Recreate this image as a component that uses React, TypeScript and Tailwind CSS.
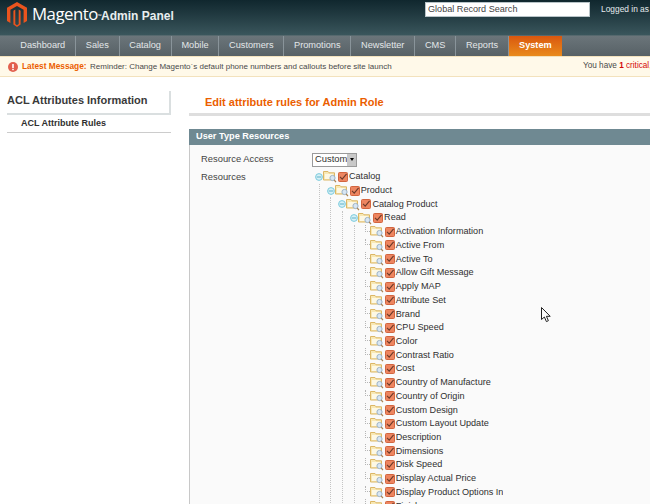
const navItems = ["Dashboard", "Sales", "Catalog", "Mobile", "Customers", "Promotions", "Newsletter", "CMS", "Reports"];
const leaves = ["Activation Information", "Active From", "Active To", "Allow Gift Message", "Apply MAP", "Attribute Set", "Brand", "CPU Speed", "Color", "Contrast Ratio", "Cost", "Country of Manufacture", "Country of Origin", "Custom Design", "Custom Layout Update", "Description", "Dimensions", "Disk Speed", "Display Actual Price", "Display Product Options In", "Finish"];

function Logo() {
  return (
    <svg width="20" height="25" viewBox="0 0 20 25" className="shrink-0">
      <path d="M10 0 L20 5.8 V19 L16.6 21 V7.8 L10 4 L3.4 7.8 V21 L0 19 V5.8 Z" fill="#e9541e" />
      <path d="M8.3 7.6 V22 L10 23.2 L11.7 22 V7.6 L13.6 8.7 V22.4 L10 25 L6.4 22.4 V8.7 Z" fill="#e9541e" />
    </svg>
  );
}

function Minus() {
  return (
    <svg width="8" height="8" viewBox="0 0 8 8" className="shrink-0">
      <circle cx="4" cy="4" r="3.4" fill="#d6f0f6" stroke="#7ccbdd" strokeWidth="1" />
      <path d="M1.8 4 H6.2" stroke="#5fb2c8" strokeWidth="1" />
    </svg>
  );
}

function Folder() {
  return (
    <svg width="14" height="13" viewBox="0 0 14 13" className="shrink-0">
      <path d="M0.5 1.5 H5 L6 2.8 H11.5 V10 H0.5 Z" fill="#f8e8b4" stroke="#dcb766" strokeWidth="1" />
      <path d="M2 4 H10 V9 H2 Z" fill="#fdf8e4" />
      <circle cx="9.5" cy="8" r="2.6" fill="#d8e6f3" stroke="#9db4c8" strokeWidth="1" />
      <path d="M11.2 10 L13 12.2" stroke="#a98456" strokeWidth="1.2" />
    </svg>
  );
}

function Check() {
  return (
    <svg width="10" height="10" viewBox="0 0 10 10" className="shrink-0">
      <rect x="0.5" y="0.5" width="9" height="9" rx="1" fill="#ed8560" stroke="#d2653f" strokeWidth="1" />
      <path d="M2 4.8 L4.2 7.2 L8.6 1.8" fill="none" stroke="#6b3a2a" strokeWidth="1.1" />
    </svg>
  );
}

function Node({ label, leaf }: { label: string; leaf?: boolean }) {
  return (
    <div className="flex h-[13.72px] items-center text-[9.1px] leading-none text-[#2f2f2f]">
      {leaf ? (
        <div className="h-full w-[8px] shrink-0 pl-[3.5px]">
          <div className="h-1/2 w-full border-b border-l border-dotted border-[#b5b5b5]" />
        </div>
      ) : (
        <Minus />
      )}
      <Folder />
      <span className="ml-px"><Check /></span>
      <span className="ml-px whitespace-nowrap">{label}</span>
    </div>
  );
}

function Branch({ children }: { children: React.ReactNode }) {
  return <div className="ml-[3.5px] border-l border-dotted border-[#c4c4c4] pl-[7.2px]">{children}</div>;
}

export default function App() {
  return (
    <div className="relative h-[504px] w-[650px] overflow-hidden bg-white font-['Liberation_Sans',Arial,sans-serif]">
      <header className="flex h-[35px] items-start bg-gradient-to-b from-[#10272e] to-[#3a565c]">
        <div className="ml-[7px] mt-[2px]"><Logo /></div>
        <span className="ml-[5px] mt-[1px] w-[64px] shrink-0 whitespace-nowrap font-['Open_Sans',sans-serif] text-[16.8px] leading-[26px] tracking-[-0.5px] text-white">Magento<sup className="text-[5px]">™</sup></span>
        <span className="ml-[5px] mt-[8px] origin-left scale-x-[.89] whitespace-nowrap text-[13.5px] font-bold leading-[16px] text-[#e8eef0]">Admin Panel</span>
        <div className="ml-auto mt-[2px] flex h-[15px] w-[165px] shrink-0 items-center border border-[#b8c4c8] bg-white px-[2px] text-[9.1px] text-[#444]">Global Record Search</div>
        <span className="ml-[11px] mr-[-21px] mt-[4px] w-[70px] shrink-0 whitespace-nowrap text-[8.4px] leading-[11px] text-[#e6ecee]">Logged in as admin</span>
      </header>
      <nav className="flex h-[21px] border-t border-[#56696e] bg-gradient-to-b from-[#6b757a] to-[#576166] pl-[10.5px] text-[9.2px]">
        {navItems.map((item) => (
          <div key={item} className="flex items-center border-r border-[#89949a] px-[9.78px] text-[#e3e7e9]">{item}</div>
        ))}
        <div className="flex w-[53px] items-center justify-center bg-gradient-to-b from-[#d9570f] to-[#e98a1c] font-bold text-white">System</div>
      </nav>
      <div className="flex h-[21px] items-center justify-between whitespace-nowrap border-y border-[#f3e2bd] bg-[#fff9e9] pl-[8px] text-[8px] text-[#494949]">
        <div className="flex items-center">
          <svg width="10" height="10" viewBox="0 0 10 10" className="mr-[4px]">
            <circle cx="5" cy="5" r="5" fill="#e2604e" />
            <rect x="4.2" y="2" width="1.6" height="4" fill="#fff" />
            <rect x="4.2" y="6.8" width="1.6" height="1.4" fill="#fff" />
          </svg>
          <b className="mr-[3.5px] text-[8.3px] text-[#eb5e00]">Latest Message:</b>
          <span>Reminder: Change Magento`s default phone numbers and callouts before site launch</span>
        </div>
        <div className="w-[67px] shrink-0 text-[8.2px]">You have <b className="text-[#d40707]">1</b> <span className="text-[#d40707]">critical,</span></div>
      </div>
      <main className="flex pt-[14px]">
        <aside className="w-[171px] shrink-0 pl-[7px]">
          <div className="h-[24px] border-b-2 border-r-2 border-[#dadfe0] pt-[1px] text-[11px] font-bold leading-[16px] text-[#3a3a3a]">ACL Attributes Information</div>
          <div className="h-[18px] border-b border-[#ccc] pl-[14px] pt-[2px] text-[9px] font-bold leading-[12px] text-[#2f2f2f]">ACL Attribute Rules</div>
        </aside>
        <section className="ml-[18px] min-w-0 flex-1">
          <h1 className="h-[25px] border-b-[3px] border-[#dedede] pl-[16px] pt-[3px] text-[11px] font-bold leading-[16px] text-[#eb5e00]">Edit attribute rules for Admin Role</h1>
          <div className="mt-[13px] flex h-[16px] items-center bg-[#6f8992] pl-[7px] text-[9.2px] font-bold text-white">User Type Resources</div>
          <div className="border-l border-[#c8c8c8] bg-[#fafafa] pl-[11px] pt-[7px] text-[9.4px] text-[#444]">
            <div className="flex h-[15px] items-center">
              <span className="w-[111px] shrink-0">Resource Access</span>
              <div className="flex h-[14px] w-[45px] items-center justify-between border border-[#9a9a9a] bg-white pl-[2px] text-[#333]">
                Custom
                <span className="flex h-full w-[10px] items-center justify-center bg-[#c8c8c8]">
                  <span className="border-x-[2.5px] border-t-[3px] border-x-transparent border-t-black" />
                </span>
              </div>
            </div>
            <div className="mt-[2px] flex">
              <span className="mt-[2px] w-[114px] shrink-0 leading-[11px]">Resources</span>
              <div className="mt-px h-[340px] overflow-hidden">
                <Node label="Catalog" />
                <Branch>
                  <Node label="Product" />
                  <Branch>
                    <Node label="Catalog Product" />
                    <Branch>
                      <Node label="Read" />
                      <Branch>
                        {leaves.map((leaf) => <Node key={leaf} label={leaf} leaf />)}
                      </Branch>
                    </Branch>
                  </Branch>
                </Branch>
              </div>
            </div>
          </div>
        </section>
      </main>
      <svg width="11" height="16" viewBox="0 0 11 16" className="absolute left-[541px] top-[307px]">
        <path d="M0.5 0.5 V12.5 L3.4 10 L5.4 14.6 L7.4 13.7 L5.4 9.3 L9.2 9.3 Z" fill="#fff" stroke="#222" strokeWidth="1" />
      </svg>
    </div>
  );
}
